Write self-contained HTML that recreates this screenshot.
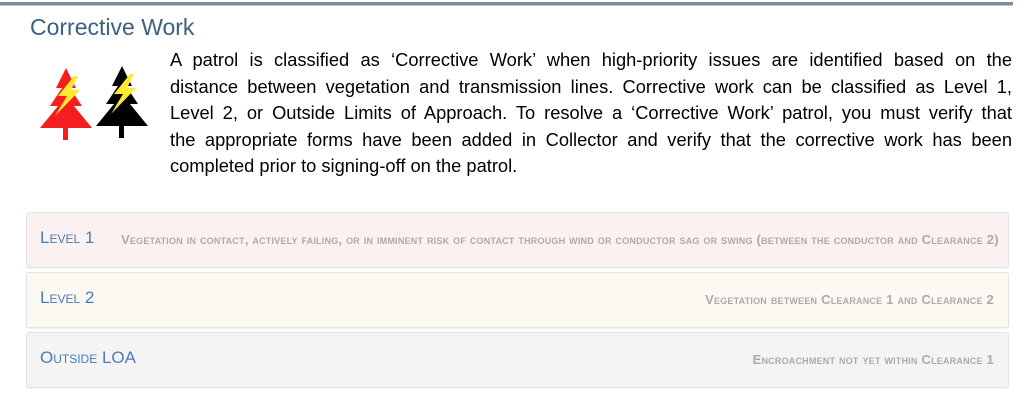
<!DOCTYPE html>
<html><head><meta charset="utf-8"><style>
body{margin:0;width:1036px;height:401px;background:#fff;position:relative;overflow:hidden;font-family:"Liberation Sans",sans-serif}
.topline{position:absolute;left:0;top:2px;width:1013px;height:3px;background:#7f8c99;border-bottom:1px solid #b8c4d0}
.title{position:absolute;left:30px;top:14px;font-size:23px;color:#3d5f80}
.p{position:absolute;left:170px;top:47px;width:842px;font-size:18.3px;color:#000;line-height:26.6px}
.p div{text-align:justify;text-align-last:justify;white-space:nowrap}
.p div.l{text-align-last:left}
.row{position:absolute;left:26px;width:981px;height:54px;border:1px solid #e3e3e3;border-radius:3px;box-shadow:0 1px 1px rgba(0,0,0,.06);font-variant:small-caps}
.lab{position:absolute;left:13px;top:15px;font-size:17px;color:#4a7db3}
.desc{position:absolute;top:19px;font-size:13.1px;letter-spacing:0.2px;font-weight:bold;color:#ababab;white-space:nowrap}
</style></head><body>
<div class="topline"></div>
<div class="title">Corrective Work</div>
<svg style="position:absolute;left:36px;top:62px" width="120" height="82" viewBox="0 0 120 82">
 <g>
  <polygon points="30,6 40,26 34,26 46,44 38,44 56,66 4,66 22,44 14,44 26,26 20,26" fill="#f51e1e"/>
  <rect x="27" y="64" width="5" height="14" fill="#f51e1e"/>
  <polygon points="38,14 22,34 31,34 19,54 44,28 35,28 42,14" fill="#ffe830"/>
 </g>
 <g transform="translate(56,-2)">
  <polygon points="30,6 40,26 34,26 46,44 38,44 56,66 4,66 22,44 14,44 26,26 20,26" fill="#000"/>
  <rect x="27" y="64" width="5" height="14" fill="#000"/>
  <polygon points="38,14 22,34 31,34 19,54 44,28 35,28 42,14" fill="#ffe830"/>
 </g>
</svg>
<div class="p">
<div>A patrol is classified as ‘Corrective Work’ when high-priority issues are identified based on the</div>
<div>distance between vegetation and transmission lines. Corrective work can be classified as Level 1,</div>
<div>Level 2, or Outside Limits of Approach. To resolve a ‘Corrective Work’ patrol, you must verify that</div>
<div>the appropriate forms have been added in Collector and verify that the corrective work has been</div>
<div class="l">completed prior to signing-off on the patrol.</div>
</div>
<div class="row" style="top:212px;background:#fcf1f1"><span class="lab">Level 1</span><span class="desc" style="left:94px">Vegetation in contact, actively failing, or in imminent risk of contact through wind or conductor sag or swing (between the conductor and Clearance 2)</span></div>
<div class="row" style="top:272px;background:#fcf9f3"><span class="lab">Level 2</span><span class="desc" style="right:14px">Vegetation between Clearance 1 and Clearance 2</span></div>
<div class="row" style="top:332px;background:#f4f4f4"><span class="lab">Outside LOA</span><span class="desc" style="right:14px">Encroachment not yet within Clearance 1</span></div>
</body></html>
